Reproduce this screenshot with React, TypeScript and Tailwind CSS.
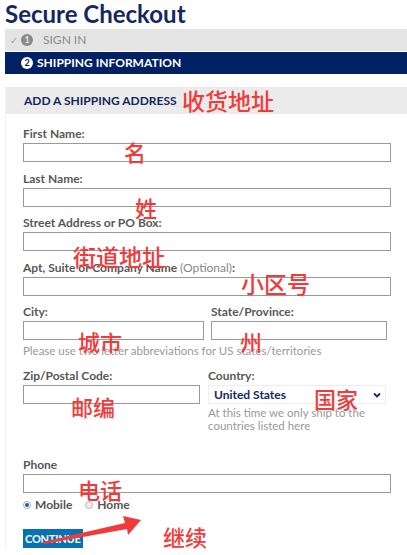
import React, { useState } from 'react';

const Label = ({ children }: { children: React.ReactNode }) => (
  <label className="block text-[12px] font-bold text-[#585858] leading-[14px] mb-[2px]">{children}</label>
);

const TextInput = ({ className = '' }: { className?: string }) => (
  <input type="text" className={`block h-[19px] border border-[#999] bg-white ${className}`} />
);

const Note = ({ text, className }: { text: string; className: string }) => (
  <span
    className={`absolute leading-none font-medium text-[#f23a3a] font-['Noto_Sans_CJK_SC',sans-serif] pointer-events-none ${className}`}
  >
    {text}
  </span>
);

const App = () => {
  const [phoneType, setPhoneType] = useState<'mobile' | 'home'>('mobile');

  return (
    <div className="relative w-[407px] h-[555px] overflow-hidden bg-white font-['Lato',sans-serif]">
      <h1 className="h-[29px] pl-[5px] pt-[1px] text-[24px] leading-[26px] font-bold text-[#14285f]">
        Secure Checkout
      </h1>

      {/* steps */}
      <div className="ml-[5px] flex flex-col gap-[1px]">
        <div className="h-[22px] bg-[#e4e4e4] flex items-center pl-[5px] text-[12px] text-[#8a8a8a]">
          <span className="text-[10px] text-[#a0a0a0]">✓</span>
          <span className="ml-[3px] w-[12px] h-[12px] rounded-full bg-[#8a8a8a] text-[#e4e4e4] text-[9px] font-bold flex items-center justify-center">1</span>
          <span className="ml-[10px]">SIGN IN</span>
        </div>
        <div className="h-[22px] bg-[#002163] flex items-center pl-[16px] text-[12px] font-bold text-white">
          <span className="w-[12px] h-[12px] rounded-full bg-white text-[#002163] text-[9px] font-bold flex items-center justify-center">2</span>
          <span className="ml-[4px]">SHIPPING INFORMATION</span>
        </div>
      </div>

      {/* address form */}
      <div className="ml-[5px] mt-[13px] border-l border-[#f2f2f2]">
        <div className="h-[27px] bg-[#ebebeb] flex items-center pl-[18px] text-[12px] font-bold text-[#14285f]">
          ADD A SHIPPING ADDRESS
        </div>

        <form className="pl-[17px] pt-[13px]" onSubmit={(e) => e.preventDefault()}>
          <Label>First Name:</Label>
          <TextInput className="w-[368px]" />

          <div className="mt-[10px]">
            <Label>Last Name:</Label>
            <TextInput className="w-[368px]" />
          </div>

          <div className="mt-[9px]">
            <Label>Street Address or PO Box:</Label>
            <TextInput className="w-[368px]" />
          </div>

          <div className="mt-[10px]">
            <Label>
              Apt, Suite or Company Name <span className="font-normal text-[#888]">(Optional)</span>:
            </Label>
            <TextInput className="w-[368px]" />
          </div>

          <div className="mt-[9px] flex gap-[7px]">
            <div>
              <Label>City:</Label>
              <TextInput className="w-[181px]" />
            </div>
            <div>
              <Label>State/Province:</Label>
              <TextInput className="w-[176px]" />
            </div>
          </div>
          <p className="mt-[4px] text-[11.5px] leading-[14px] text-[#999]">
            Please use two letter abbreviations for US states/territories
          </p>

          <div className="mt-[11px] flex gap-[8px]">
            <div>
              <Label>Zip/Postal Code:</Label>
              <TextInput className="w-[177px]" />
            </div>
            <div className="w-[178px]">
              <Label>Country:</Label>
              <div className="h-[19px] border border-[#eee] flex items-center justify-between pl-[5px] pr-[4px]">
                <span className="text-[12px] font-bold text-[#14285f]">United States</span>
                <svg width="8" height="6" viewBox="0 0 8 6">
                  <path d="M1 1.5 L4 4.5 L7 1.5" fill="none" stroke="#14285f" strokeWidth="1.8" />
                </svg>
              </div>
              <p className="mt-[2px] text-[11.5px] leading-[13px] text-[#999]">
                At this time we only ship to the countries listed here
              </p>
            </div>
          </div>

          <div className="mt-[26px]">
            <Label>Phone</Label>
            <TextInput className="w-[368px]" />
          </div>

          <div className="mt-[5px] h-[14px] flex items-center text-[12px] font-bold text-[#555]">
            <label className="flex items-center gap-[4px]" onClick={() => setPhoneType('mobile')}>
              <span className="w-[8px] h-[8px] rounded-full border border-[#aaa] bg-white flex items-center justify-center">
                {phoneType === 'mobile' && <span className="w-[4px] h-[4px] rounded-full bg-[#1d5fa8]" />}
              </span>
              Mobile
            </label>
            <label className="ml-[13px] flex items-center gap-[4px]" onClick={() => setPhoneType('home')}>
              <span className="w-[8px] h-[8px] rounded-full border border-[#bbb] bg-[#eee] flex items-center justify-center">
                {phoneType === 'home' && <span className="w-[4px] h-[4px] rounded-full bg-[#1d5fa8]" />}
              </span>
              Home
            </label>
          </div>

          <button
            type="submit"
            className="block mt-[17px] h-[19px] px-[2px] bg-[#0672b4] text-white text-[11px] font-bold leading-none tracking-[-0.2px]"
          >
            CONTINUE
          </button>
        </form>
      </div>

      {/* annotations */}
      <Note text="收货地址" className="left-[182px] top-[89px] text-[23px]" />
      <Note text="名" className="left-[124px] top-[140px] text-[22px]" />
      <Note text="姓" className="left-[135px] top-[196px] text-[22px]" />
      <Note text="街道地址" className="left-[73px] top-[245px] text-[23px]" />
      <Note text="小区号" className="left-[241px] top-[272px] text-[23px]" />
      <Note text="城市" className="left-[78px] top-[330px] text-[22px]" />
      <Note text="州" className="left-[240px] top-[330px] text-[22px]" />
      <Note text="邮编" className="left-[71px] top-[395px] text-[22px]" />
      <Note text="国家" className="left-[314px] top-[387px] text-[22px]" />
      <Note text="电话" className="left-[78px] top-[478px] text-[22px]" />
      <Note text="继续" className="left-[163px] top-[525px] text-[22px]" />

      <svg className="absolute left-0 top-0 pointer-events-none" width="407" height="555">
        <polygon points="42,542 125,523 123,516 141,520 128,535 127,529 44,544" fill="#f23a3a" />
      </svg>
    </div>
  );
};

export default App;
